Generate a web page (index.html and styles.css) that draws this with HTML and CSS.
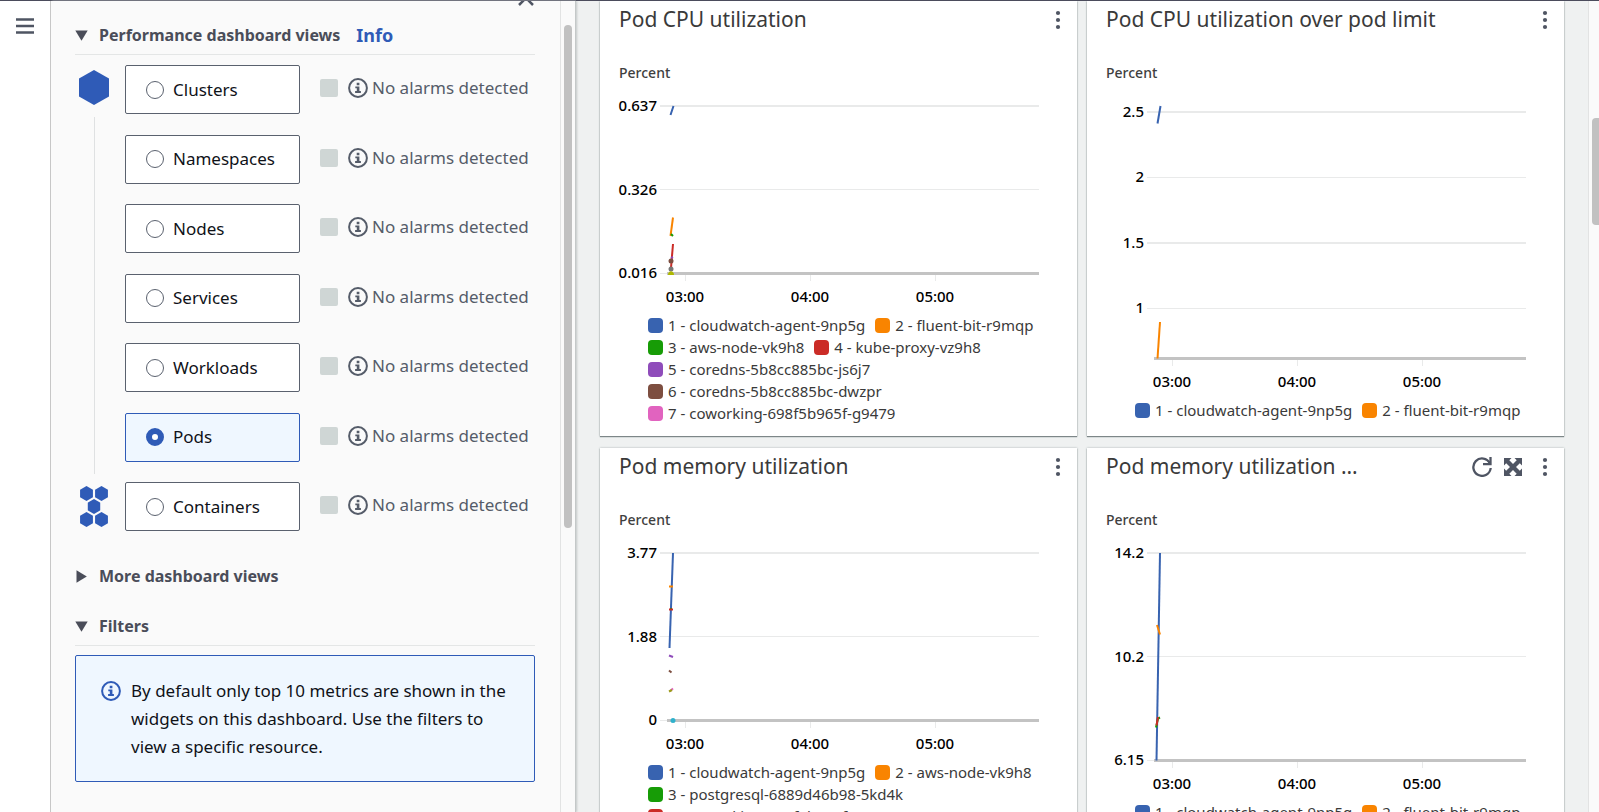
FILE: index.html
```html
<!DOCTYPE html>
<html lang="en">
<head>
<meta charset="utf-8">
<title>Container Insights – Pods</title>
<link rel="stylesheet" href="styles.css">
</head>
<body>
<svg class="defs" aria-hidden="true">
  <symbol id="info" viewBox="0 0 20 20">
    <circle cx="10" cy="10" r="8.9" fill="none" stroke="currentColor" stroke-width="2"/>
    <path d="M8.7 4.8h2.7v2.4H8.7zM7.3 8.4h4.1v4.7h1.5V15H7.1v-1.9h1.7v-2.9H7.3z" fill="currentColor"/>
  </symbol>
  <symbol id="dots" viewBox="0 0 6 20">
    <circle cx="3" cy="3" r="2.1" fill="currentColor"/><circle cx="3" cy="10" r="2.1" fill="currentColor"/><circle cx="3" cy="17" r="2.1" fill="currentColor"/>
  </symbol>
  <symbol id="hex" viewBox="0 0 30 35"><path d="M15 0 30 8.5v18L15 35 0 26.500v-18z" fill="currentColor"/></symbol>
</svg>
<div class="app">
  <nav class="rail">
    <button class="icon-button" aria-label="Open navigation">
      <svg width="18" height="16" viewBox="0 0 18 16"><path d="M0 1.500h18M0 8h18M0 14.500h18" stroke="currentColor" stroke-width="2.300"/></svg>
    </button>
  </nav>

  <aside class="panel">
    <div class="panel-body">
      <button class="icon-button close" aria-label="Close panel">
        <svg width="18" height="18" viewBox="0 0 18 18"><path d="M2 2l14 14M16 2L2 16" stroke="currentColor" stroke-width="2.500"/></svg>
      </button>
      <section>
        <h2 class="section-title ruled">
          <button class="toggle" aria-expanded="true"><svg class="caret" viewBox="0 0 13 13"><path d="M.3 1.500h12.400L6.500 11.800z" fill="currentColor"/></svg>Performance dashboard views</button>
          <a class="info-link" href="#info">Info</a>
        </h2>
        <div class="views">
          <div class="track">
            <svg class="hexagon" width="30" height="35"><use href="#hex"/></svg>
            <span class="track-line"></span>
            <svg class="hexagons" width="28" height="41" viewBox="0 0 28 41">
              <use href="#hex" x="0" y="0" width="13" height="15"/><use href="#hex" x="15" y="0" width="13" height="15"/>
              <use href="#hex" x="7.500" y="13" width="13" height="15"/>
              <use href="#hex" x="0" y="26" width="13" height="15"/><use href="#hex" x="15" y="26" width="13" height="15"/>
            </svg>
          </div>
          <div class="view-list">
            <div class="view"><label class="tile"><input type="radio" name="view">Clusters</label><span class="alarm"><i class="state"></i><svg class="info-icon"><use href="#info"/></svg>No alarms detected</span></div>
            <div class="view"><label class="tile"><input type="radio" name="view">Namespaces</label><span class="alarm"><i class="state"></i><svg class="info-icon"><use href="#info"/></svg>No alarms detected</span></div>
            <div class="view"><label class="tile"><input type="radio" name="view">Nodes</label><span class="alarm"><i class="state"></i><svg class="info-icon"><use href="#info"/></svg>No alarms detected</span></div>
            <div class="view"><label class="tile"><input type="radio" name="view">Services</label><span class="alarm"><i class="state"></i><svg class="info-icon"><use href="#info"/></svg>No alarms detected</span></div>
            <div class="view"><label class="tile"><input type="radio" name="view">Workloads</label><span class="alarm"><i class="state"></i><svg class="info-icon"><use href="#info"/></svg>No alarms detected</span></div>
            <div class="view"><label class="tile"><input type="radio" name="view" checked>Pods</label><span class="alarm"><i class="state"></i><svg class="info-icon"><use href="#info"/></svg>No alarms detected</span></div>
            <div class="view"><label class="tile"><input type="radio" name="view">Containers</label><span class="alarm"><i class="state"></i><svg class="info-icon"><use href="#info"/></svg>No alarms detected</span></div>
          </div>
        </div>
      </section>
      <section class="more">
        <h2 class="section-title"><button class="toggle" aria-expanded="false"><svg class="caret" viewBox="0 0 13 13"><path d="M1.500.3v12.400L11.800 6.500z" fill="currentColor"/></svg>More dashboard views</button></h2>
      </section>
      <section class="filters">
        <h2 class="section-title ruled"><button class="toggle" aria-expanded="true"><svg class="caret" viewBox="0 0 13 13"><path d="M.3 1.500h12.400L6.500 11.800z" fill="currentColor"/></svg>Filters</button></h2>
        <div class="notice">
          <svg class="info-icon"><use href="#info"/></svg>
          <p>By default only top 10 metrics are shown in the widgets on this dashboard. Use the filters to view a specific resource.</p>
        </div>
      </section>
    </div>
    <div class="scrollbar panel-scroll"><span class="thumb"></span></div>
  </aside>

  <main class="board">
    <div class="widgets">
      <article class="widget">
        <header class="widget-head"><h3>Pod CPU utilization</h3><button class="icon-button" aria-label="Widget actions"><svg width="6" height="20"><use href="#dots"/></svg></button></header>
        <p class="unit">Percent</p>
        <svg class="chart" viewBox="0 0 477 232">
          <path class="grid strong" d="M60 24h379"/><path class="grid" d="M60 107.500h379M60 191.500h8M85.500 193v6M210.500 193v6M335.500 193v6"/>
          <path class="axis" d="M67 191.500h372"/>
          <g class="y-labels"><text x="57" y="29">0.637</text><text x="57" y="113">0.326</text><text x="57" y="196">0.016</text></g>
          <g class="x-labels"><text x="85" y="220">03:00</text><text x="210" y="220">04:00</text><text x="335" y="220">05:00</text></g>
          <g class="series">
            <path class="s1" d="M70.500 33l3-9"/><path class="s2" d="M70.500 154l2.500-18.500"/><path class="s3" d="M71 152l2 2"/><path class="s4" d="M71 186l2-24"/><path class="s5" d="M71 176l2-1"/>
            <circle class="d6" cx="71" cy="179" r="2.500"/><circle class="d8" cx="71" cy="187" r="2.500"/><path class="d9" d="M68 193c0-5 6-5 6 0z"/>
          </g>
        </svg>
        <ul class="legend">
          <li><i class="c1"></i>1 - cloudwatch-agent-9np5g</li><li><i class="c2"></i>2 - fluent-bit-r9mqp</li>
          <li><i class="c3"></i>3 - aws-node-vk9h8</li><li><i class="c4"></i>4 - kube-proxy-vz9h8</li>
          <li><i class="c5"></i>5 - coredns-5b8cc885bc-js6j7</li>
          <li><i class="c6"></i>6 - coredns-5b8cc885bc-dwzpr</li>
          <li><i class="c7"></i>7 - coworking-698f5b965f-g9479</li>
        </ul>
      </article>

      <article class="widget">
        <header class="widget-head"><h3>Pod CPU utilization over pod limit</h3><button class="icon-button" aria-label="Widget actions"><svg width="6" height="20"><use href="#dots"/></svg></button></header>
        <p class="unit">Percent</p>
        <svg class="chart" viewBox="0 0 477 317">
          <path class="grid strong" d="M60 30h379M60 161h379"/>
          <path class="grid" d="M60 95.500h379M60 226.500h379M85.500 278v6M210.500 278v6M335.500 278v6"/>
          <path class="axis" d="M67 276.500h372"/>
          <g class="y-labels"><text x="57" y="35">2.5</text><text x="57" y="100">2</text><text x="57" y="166">1.5</text><text x="57" y="231">1</text></g>
          <g class="x-labels"><text x="85" y="305">03:00</text><text x="210" y="305">04:00</text><text x="335" y="305">05:00</text></g>
          <g class="series"><path class="s1" d="M70.500 41.500l3-17.500"/><path class="s2" d="M70.500 276.500l2.500-36.500"/></g>
        </svg>
        <ul class="legend"><li><i class="c1"></i>1 - cloudwatch-agent-9np5g</li><li><i class="c2"></i>2 - fluent-bit-r9mqp</li></ul>
      </article>

      <article class="widget">
        <header class="widget-head"><h3>Pod memory utilization</h3><button class="icon-button" aria-label="Widget actions"><svg width="6" height="20"><use href="#dots"/></svg></button></header>
        <p class="unit">Percent</p>
        <svg class="chart" viewBox="0 0 477 232">
          <path class="grid strong" d="M60 24h379"/><path class="grid" d="M60 107.500h379M60 191.500h8M85.500 193v6M210.500 193v6M335.500 193v6"/>
          <path class="axis" d="M67 191.500h372"/>
          <g class="y-labels"><text x="57" y="29">3.77</text><text x="57" y="113">1.88</text><text x="57" y="196">0</text></g>
          <g class="x-labels"><text x="85" y="220">03:00</text><text x="210" y="220">04:00</text><text x="335" y="220">05:00</text></g>
          <g class="series">
            <path class="s1" d="M69.500 119l3.500-95"/><path class="s2" d="M69 57.500h4"/><path class="s3" d="M70 80h2"/><path class="s4" d="M69 80.500h4"/><path class="s5" d="M69 126.500l4 1.500"/><path class="s6" d="M69 141.500l2.500 2"/><path class="s7" d="M70 162l3-2.500"/><path class="s9" d="M69 162.500l3-1.500"/>
            <circle class="d10" cx="73" cy="191.500" r="2.500"/>
          </g>
        </svg>
        <ul class="legend">
          <li><i class="c1"></i>1 - cloudwatch-agent-9np5g</li><li><i class="c2"></i>2 - aws-node-vk9h8</li>
          <li><i class="c3"></i>3 - postgresql-6889d46b98-5kd4k</li>
          <li><i class="c4"></i>4 - coworking-698f5b965f-g9479</li>
        </ul>
      </article>

      <article class="widget">
        <header class="widget-head"><h3>Pod memory utilization …</h3>
          <button class="icon-button" aria-label="Refresh"><svg width="20" height="20" viewBox="0 0 20 20"><path d="M17.800 6.200A8.700 8.700 0 1 0 18.700 11" fill="none" stroke="currentColor" stroke-width="2.300"/><path d="M18.500 0v7.200H11" fill="none" stroke="currentColor" stroke-width="2.300"/></svg></button>
          <button class="icon-button maximize" aria-label="Maximize"><svg width="18" height="18" viewBox="0 0 18 18"><path d="M0 0h7.500L5.300 2.200 9 6l3.700-3.800L10.500 0H18v7.500l-2.200-2.200L12 9l3.800 3.700 2.200-2.200V18h-7.500l2.200-2.200L9 12l-3.700 3.800L7.500 18H0v-7.500l2.200 2.200L6 9 2.200 5.300 0 7.500z" fill="currentColor"/></svg></button>
          <button class="icon-button" aria-label="Widget actions"><svg width="6" height="20"><use href="#dots"/></svg></button></header>
        <p class="unit">Percent</p>
        <svg class="chart" viewBox="0 0 477 272">
          <path class="grid strong" d="M60 24h379"/><path class="grid" d="M60 127.500h379M60 231.500h8M85.500 233v6M210.500 233v6M335.500 233v6"/>
          <path class="axis" d="M67 231.500h372"/>
          <g class="y-labels"><text x="57" y="29">14.2</text><text x="57" y="133">10.2</text><text x="57" y="236">6.15</text></g>
          <g class="x-labels"><text x="85" y="260">03:00</text><text x="210" y="260">04:00</text><text x="335" y="260">05:00</text></g>
          <g class="series"><path class="s1" d="M69.500 231.500L73 24"/><path class="s2" d="M70 96l3 9.500"/><path class="s3" d="M69 198.500l2-9 2-1"/><path class="s4" d="M69.500 196.500l1.500-8.500"/></g>
        </svg>
        <ul class="legend"><li><i class="c1"></i>1 - cloudwatch-agent-9np5g</li><li><i class="c2"></i>2 - fluent-bit-r9mqp</li></ul>
      </article>
    </div>
  </main>
  <div class="scrollbar page-scroll"><span class="thumb"></span></div>
</div>
</body>
</html>
```

FILE: styles.css
```css
* { box-sizing: border-box; }
body, h2, h3, p, ul { margin: 0; padding: 0; }
body {
  font: 17px/28px "Noto Sans", "Open Sans", sans-serif;
  color: #0f1218;
  background: #eff1f1;
  overflow: hidden;
}
svg { display: block; flex: none; }
.defs { position: absolute; width: 0; height: 0; }
.icon-button, .toggle {
  display: flex;
  align-items: center;
  padding: 0;
  border: 0;
  background: none;
  color: #4f5563;
  font: inherit;
  cursor: pointer;
}
.app {
  display: flex;
  height: 100vh;
  overflow: hidden;
  box-shadow: inset 0 1px #4b4c5c;
}
.rail, .panel, .page-scroll { margin-top: 1px; }

.rail {
  flex: 0 0 51px;
  padding: 17px 16px;
  background: #fff;
  border-right: 1px solid #c8c8c8;
}

/* Side panel */
.panel {
  flex: 0 0 525px;
  display: flex;
  background: #fafafa;
  border-right: 1px solid #c4c8c8;
  box-shadow: 1px 0 2px #c4c8c8;
}
.panel-body {
  flex: 1;
  display: flex;
  flex-direction: column;
  padding: 0 25px 0 24px;
  overflow: hidden;
}
.close { align-self: flex-end; margin-top: -12px; }
.section-title {
  display: flex;
  align-items: center;
  gap: 16px;
  font-size: 16px;
  font-weight: 700;
  line-height: 28px;
  color: #4a4d59;
}
.section-title.ruled { padding-bottom: 5px; border-bottom: 1px solid #e4e6e6; }
.panel-body > section:first-of-type { padding-top: 14px; }
.section-title .toggle { gap: 11px; color: #4a4d59; }
.caret { width: 13px; height: 13px; }
.info-link { font-size: 18px; color: #2f5bb7; text-decoration: none; }
.views {
  display: flex;
  gap: 15px;
  margin-top: 10px;
  min-height: 466px;
}
.track {
  display: flex;
  flex-direction: column;
  align-items: center;
  gap: 12px;
  width: 35px;
  padding: 5px 0 4px 3px;
  color: #2f5bb7;
}
.track-line { flex: 1; width: 1px; background: #dfe1e2; }
.view-list { display: flex; flex-direction: column; justify-content: space-between; flex: 1; }
.view { display: flex; gap: 20px; }
.tile {
  display: flex;
  align-items: center;
  gap: 9px;
  width: 175px;
  height: 49px;
  padding: 0 20px;
  background: #fff;
  border: 1px solid #5a616e;
  border-radius: 2px;
  cursor: pointer;
}
.tile input {
  appearance: none;
  width: 18px;
  height: 18px;
  margin: 0;
  border: 1px solid #5a616e;
  border-radius: 50%;
  background: #fff;
}
.tile:has(input:checked) { background: #eff7ff; border-color: #2f5bb7; }
.tile input:checked { border: 6px solid #2f5bb7; }
.alarm { display: flex; align-items: center; gap: 4px; padding-bottom: 3px; color: #555c69; white-space: nowrap; }
.state { width: 18px; height: 18px; margin-right: 6px; border-radius: 2px; background: #cfd6d5; }
.info-icon { width: 20px; height: 20px; }
.more { margin-top: 31px; }
.filters { margin-top: 22px; }
.notice {
  display: flex;
  gap: 10px;
  margin-top: 9px;
  padding: 21px 20px 20px 25px;
  background: #eff7ff;
  border: 1px solid #2f5bb7;
  border-radius: 2px;
}
.notice .info-icon { margin-top: 4px; color: #2f5bb7; }

/* Scrollbars */
.scrollbar { background: #fafafa; border-left: 1px solid #e2e3e3; }
.thumb { display: block; border-radius: 4px; background: #c1c1c1; }
.panel-scroll { width: 15px; padding: 24px 3px; }
.panel-scroll .thumb { height: 503px; }
.page-scroll { flex: 0 0 11px; padding: 117px 0 0 3px; }
.page-scroll .thumb { height: 107px; border-radius: 4px 0 0 4px; }

/* Widgets */
.board { flex: 1; min-width: 0; padding: 0 24px; border-top: 1px solid #4b4c5c; overflow: hidden; }
.widgets {
  display: grid;
  grid-template-columns: repeat(2, minmax(0, 1fr));
  gap: 12px 10px;
}
.widget {
  padding-bottom: 12px;
  background: #fff;
  box-shadow: 0 1px 1px #7d8688, 0 0 2px #aab2b3;
}
.widget-head {
  display: flex;
  align-items: center;
  gap: 12px;
  height: 38px;
  padding: 0 16px 0 19px;
}
.widget-head h3 {
  flex: 1;
  min-width: 0;
  overflow: hidden;
  padding-bottom: 2px;
  white-space: nowrap;
  text-overflow: ellipsis;
  font-size: 21px;
  font-weight: 400;
  color: #3a3a3a;
}
.maximize { margin-right: 8px; }
.unit { margin: 25px 0 0 19px; font-size: 14px; font-weight: 500; line-height: 18px; color: #3f3f3f; }
.chart { width: 100%; height: auto; font-size: 15px; font-weight: 500; }
.grid { stroke: #e9eaea; stroke-width: 1; fill: none; }
.grid.strong { stroke-width: 2; }
.axis { stroke: #c3c3c3; stroke-width: 3; }
.y-labels { text-anchor: end; }
.x-labels { text-anchor: middle; }
.series path { fill: none; stroke-width: 2; }
.series .s1 { stroke: #3863b0; }
.series .s2 { stroke: #f98400; }
.series .s3 { stroke: #179c06; }
.series .s4 { stroke: #cb2c27; }
.series .s5 { stroke: #8f4cba; }
.series .s6 { stroke: #7d4e40; }
.series .s7 { stroke: #e163bf; }
.series .s9 { stroke: #9c9c1a; }
.d6 { fill: #7d4e40; }
.d8 { fill: #777; }
.series .d9 { fill: #aeb800; }
.d10 { fill: #2fb1cc; }
.legend {
  display: flex;
  flex-wrap: wrap;
  column-gap: 10px;
  padding: 0 20px 0 48px;
  list-style: none;
  font-size: 15px;
  line-height: 22px;
  color: #3a3a3a;
}
.legend li { display: flex; align-items: center; gap: 5px; }
.legend i { width: 15px; height: 15px; border-radius: 4px; }
.c1 { background: #3863b0; }
.c2 { background: #f98400; }
.c3 { background: #179c06; }
.c4 { background: #cb2c27; }
.c5 { background: #8f4cba; }
.c6 { background: #7d4e40; }
.c7 { background: #e163bf; }
```
